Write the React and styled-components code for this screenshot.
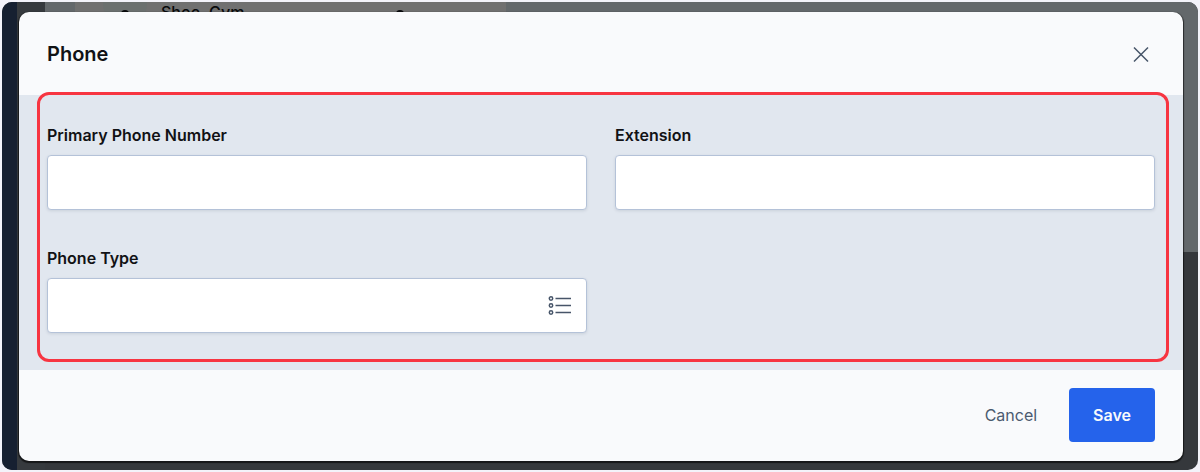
import React from 'react'
import styled, { createGlobalStyle } from 'styled-components'

const GlobalStyle = createGlobalStyle`
  * {
    box-sizing: border-box;
  }
  body {
    margin: 0;
    background: #f3f3fa;
    font-family: Inter, 'Liberation Sans', sans-serif;
    font-size: 16px;
    line-height: 24px;
    color: #111215;
  }
  button,
  input {
    font: inherit;
  }
`

const Page = styled.div`
  padding: 2px;
`

const Screen = styled.div`
  display: grid;
  overflow: hidden;
  border-radius: 10px;
  background: #35383c;
`

const Backdrop = styled.div`
  grid-area: 1 / 1;
  display: grid;
  grid-template-columns: 15px 28px 1fr;
  grid-template-rows: 250px 1fr;
`

const Sidebar = styled.div`
  grid-row: 1 / 3;
  background: #162031;
`

const Gutter = styled.div`
  grid-row: 1 / 3;
  background: #363a3e;
`

const Content = styled.div`
  display: flex;
  padding-left: 30px;
  background: #63686b;
`

const Contact = styled.div`
  display: flex;
  align-items: flex-start;
  width: 431px;
  padding-left: 28px;
  background: #707070;
  color: #08090b;
`

const Avatar = styled.div`
  display: flex;
  justify-content: center;
  width: 44px;
  height: 24px;
  margin-right: 14px;
  padding-top: 8px;
  border-radius: 0 0 22px 22px;
  background: #6b706f;
`

const ContactName = styled.span`
  flex: 1;
  font-weight: 500;
  line-height: 20px;
`

const ContactAction = styled.div`
  padding: 8px 102px 0 0;
  line-height: 0;
`

const Modal = styled.section`
  grid-area: 1 / 1;
  margin: 10px 15px 9px 17px;
  border-radius: 10px;
  background: #f9fafc;
  box-shadow: 0 1px 1px 1px rgba(0, 0, 0, 0.6);
`

const Header = styled.header`
  display: flex;
  align-items: center;
  justify-content: space-between;
  height: 83px;
  padding: 0 28px;
`

const Title = styled.h2`
  margin: 0;
  font-size: 20px;
  font-weight: 600;
`

const IconButton = styled.button`
  display: flex;
  padding: 0;
  border: 0;
  background: none;
  color: #475569;
  cursor: pointer;
`

const Body = styled.div`
  position: relative;
  display: grid;
  grid-template-columns: 1fr 1fr;
  gap: 36px 28px;
  padding: 28px 28px 37px;
  background: #e1e7ef;
`

const Highlight = styled.div`
  position: absolute;
  inset: -3px 14px 8px 18px;
  border: 3px solid #f73541;
  border-radius: 12px;
  pointer-events: none;
`

const Field = styled.div`
  display: flex;
  flex-direction: column;
  gap: 8px;
`

const Label = styled.label`
  font-weight: 600;
`

const InputBox = styled.div`
  display: flex;
  align-items: center;
  height: 55px;
  padding: 0 14px;
  border: 1px solid #b4c2d8;
  border-radius: 4px;
  background: #fff;
  box-shadow: 0 1px 3px rgba(71, 85, 105, 0.15);
`

const Input = styled.input`
  flex: 1;
  min-width: 0;
  height: 100%;
  padding: 0;
  border: 0;
  outline: 0;
  background: none;
`

const Footer = styled.footer`
  display: flex;
  justify-content: flex-end;
  gap: 8px;
  padding: 18px 28px 19px;
`

const Button = styled.button`
  height: 54px;
  padding: 0 24px;
  border: 0;
  border-radius: 4px;
  background: ${(props) => (props.$primary ? '#2563eb' : 'transparent')};
  color: ${(props) => (props.$primary ? '#f8fafc' : '#4b5a70')};
  font-weight: ${(props) => (props.$primary ? 600 : 400)};
  cursor: pointer;
`

function CloseIcon() {
  return (
    <svg width="28" height="28" viewBox="0 0 28 28" fill="none" stroke="currentColor" strokeWidth="1.5">
      <path d="M7 7.5l14 14M21 7.5l-14 14" />
    </svg>
  )
}

function ListIcon() {
  return (
    <svg width="24" height="24" viewBox="0 0 24 24" fill="none" stroke="currentColor" strokeWidth="1.5">
      <circle cx="3" cy="4.5" r="1.7" />
      <circle cx="3" cy="11.5" r="1.7" />
      <circle cx="3" cy="18.5" r="1.7" />
      <path d="M7.5 4.5h15.5M7.5 11.5h15.5M7.5 18.5h15.5" />
    </svg>
  )
}

function DotIcon() {
  return (
    <svg width="8" height="8" viewBox="0 0 8 8" fill="currentColor">
      <circle cx="4" cy="4" r="4" />
    </svg>
  )
}

function TextField({ id, label, children }) {
  return (
    <Field>
      <Label htmlFor={id}>{label}</Label>
      <InputBox>
        <Input id={id} type="text" />
        {children}
      </InputBox>
    </Field>
  )
}

function App() {
  return (
    <Page>
      <GlobalStyle />
      <Screen>
        <Backdrop>
          <Sidebar />
          <Gutter />
          <Content>
            <Contact>
              <Avatar>
                <DotIcon />
              </Avatar>
              <ContactName>Shoe, Gym</ContactName>
              <ContactAction>
                <DotIcon />
              </ContactAction>
            </Contact>
          </Content>
        </Backdrop>
        <Modal role="dialog" aria-labelledby="phone-title">
          <Header>
            <Title id="phone-title">Phone</Title>
            <IconButton type="button" aria-label="Close">
              <CloseIcon />
            </IconButton>
          </Header>
          <Body>
            <TextField id="phone-number" label="Primary Phone Number" />
            <TextField id="extension" label="Extension" />
            <TextField id="phone-type" label="Phone Type">
              <IconButton type="button" aria-label="Choose phone type">
                <ListIcon />
              </IconButton>
            </TextField>
            <Highlight />
          </Body>
          <Footer>
            <Button type="button">Cancel</Button>
            <Button type="button" $primary>
              Save
            </Button>
          </Footer>
        </Modal>
      </Screen>
    </Page>
  )
}

export default App
